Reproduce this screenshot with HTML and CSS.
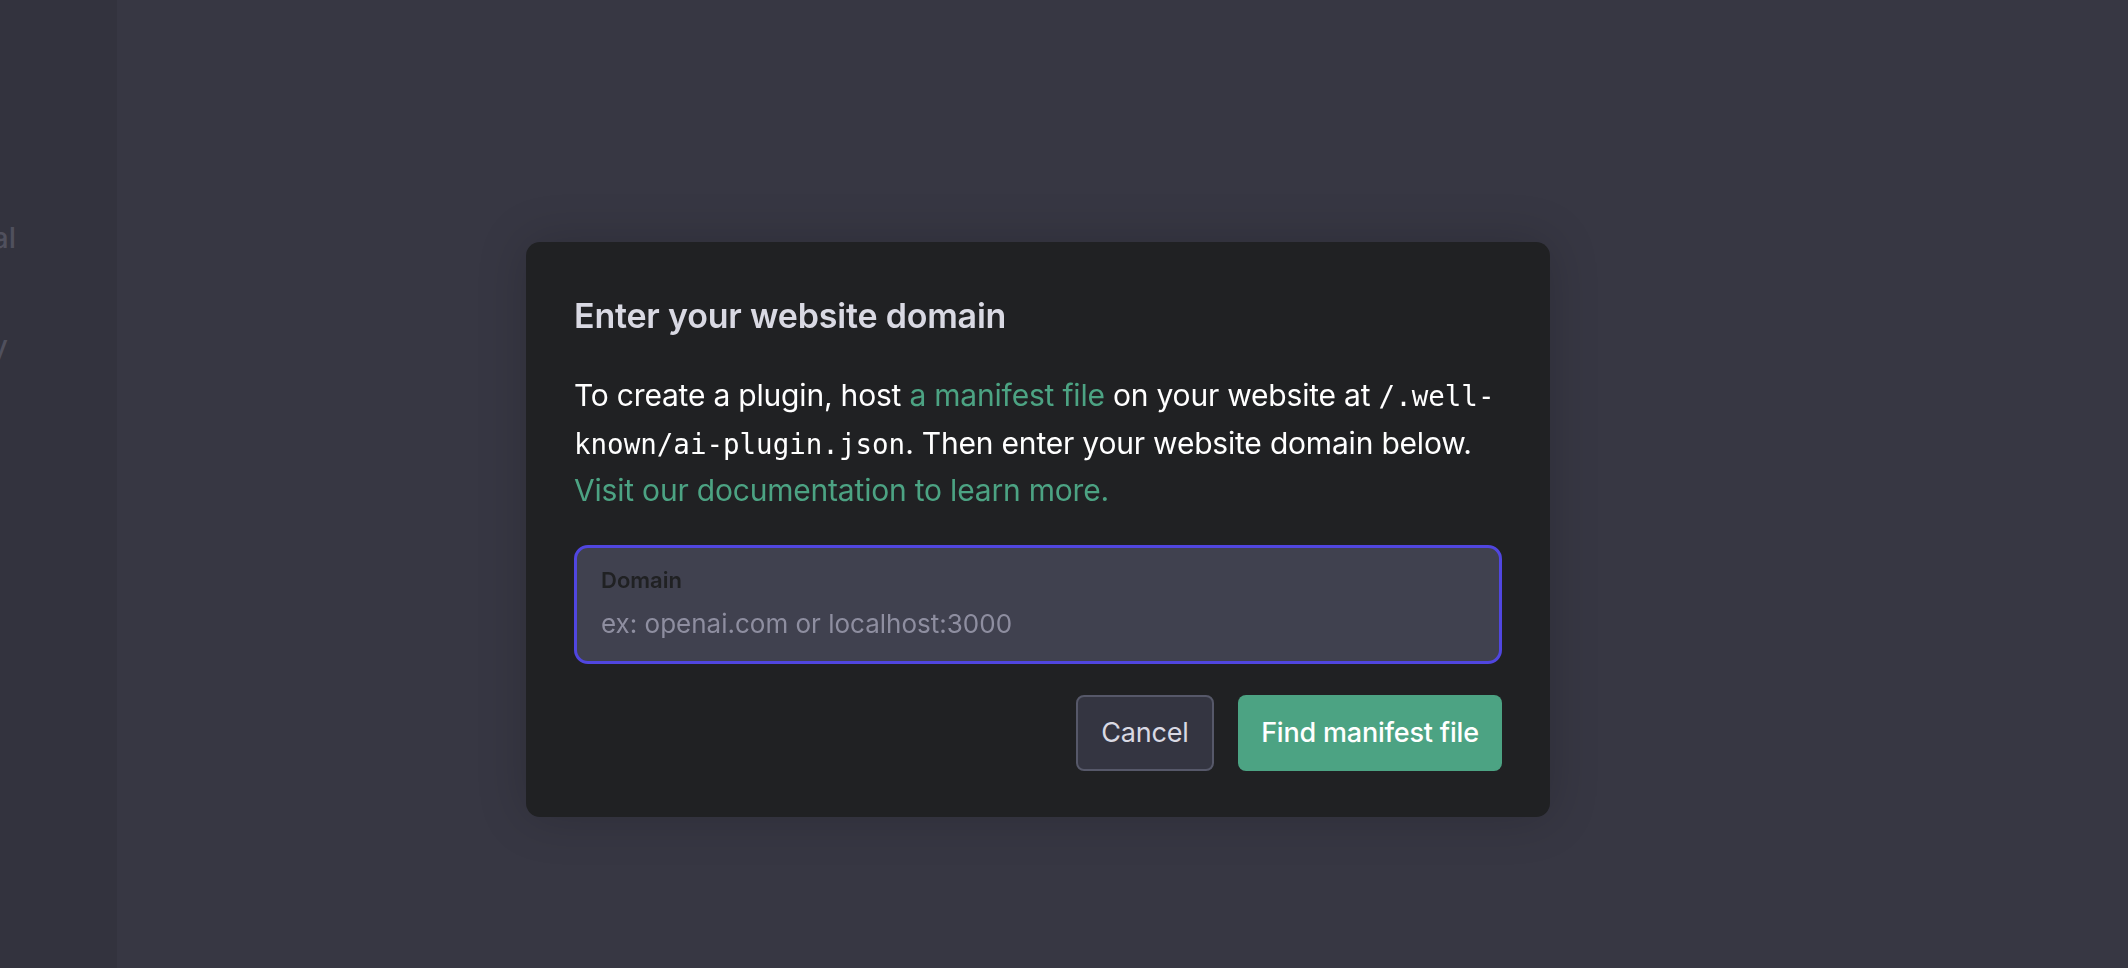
FILE: index.html
```html
<!DOCTYPE html>
<html lang="en">
<head>
<meta charset="utf-8">
<title>Enter your website domain</title>
<link rel="stylesheet" href="styles.css">
</head>
<body>
<div class="app">
  <nav class="sidebar">
    <div class="side-item side-item-a"><span>General</span></div>
    <div class="side-item side-item-b"><span>Privacy</span></div>
  </nav>
  <main class="main"></main>
</div>
<div class="overlay">
  <div class="modal" role="dialog">
    <h2 class="modal-title">Enter your website domain</h2>
    <p class="modal-text">To create a plugin, host <a class="link" href="#">a manifest file</a> on your website at <code>/.well-known/ai-plugin.json</code>. Then enter your website domain below. <a class="link" href="#">Visit our documentation to learn more.</a></p>
    <label class="field">
      <span class="field-label">Domain</span>
      <input class="field-input" type="text" placeholder="ex: openai.com or localhost:3000">
    </label>
    <div class="actions">
      <button class="btn btn-neutral" type="button">Cancel</button>
      <button class="btn btn-primary" type="button">Find manifest file</button>
    </div>
  </div>
</div>
</body>
</html>
```

FILE: styles.css
```css
* { box-sizing: border-box; }
html, body { margin: 0; padding: 0; height: 100%; }
body {
  font-family: Inter, "Noto Sans", "Liberation Sans", sans-serif;
  background: #373743;
  overflow: hidden;
}
.app {
  display: flex;
  height: 968px;
}
.sidebar {
  width: 117px;
  background: #33333e;
  display: flex;
  flex-direction: column;
  padding-top: 220px;
}
.side-item {
  display: flex;
  justify-content: flex-end;
  white-space: nowrap;
  font-size: 29px;
  line-height: 36px;
  font-weight: 500;
  color: #50505d;
}
.side-item-a { width: 16px; }
.side-item-b { width: 8px; margin-top: 72px; }
.main { flex: 1; background: #373743; }

.overlay {
  position: fixed;
  inset: 0;
  display: flex;
  align-items: flex-start;
  justify-content: center;
  padding: 242px 52px 0 0;
}
.modal {
  width: 1024px;
  height: 575px;
  background: #202123;
  border-radius: 14px;
  padding: 50px 48px 0;
  box-shadow: 0 0 50px rgba(0, 0, 0, 0.18);
}
.modal-title {
  margin: 0 0 32px;
  font-size: 34px;
  line-height: 48px;
  font-weight: 600;
  color: #d9d9e3;
  letter-spacing: -0.2px;
}
.modal-text {
  margin: 0 0 30px;
  font-size: 30px;
  line-height: 47.5px;
  color: #ffffff;
  letter-spacing: -0.2px;
}
.modal-text code {
  font-family: "DejaVu Sans Mono", "Liberation Mono", monospace;
  font-size: 27.5px;
  line-height: 1;
  letter-spacing: 0;
}
.link { color: #4ca383; text-decoration: none; }

.field {
  display: flex;
  flex-direction: column;
  gap: 11px;
  background: #40414f;
  border: 3px solid #5046e0;
  border-radius: 14px;
  padding: 17px 24px 19px;
}
.field-label {
  font-size: 22px;
  line-height: 30px;
  font-weight: 600;
  color: #202123;
}
.field-input {
  border: 0;
  outline: 0;
  padding: 0;
  margin: 0;
  background: transparent;
  font-family: inherit;
  font-size: 26px;
  line-height: 36px;
  height: 36px;
  color: #ececf1;
}
.field-input::placeholder { color: #8e8ea0; opacity: 1; }

.actions {
  display: flex;
  justify-content: flex-end;
  gap: 24px;
  margin-top: 31px;
}
.btn {
  font-family: inherit;
  font-size: 27px;
  line-height: 36px;
  height: 76px;
  border-radius: 8px;
  cursor: pointer;
  white-space: nowrap;
  letter-spacing: -0.2px;
  padding: 0;
}
.btn-neutral {
  background: #343541;
  border: 2px solid #565869;
  color: #d9d9e3;
  width: 138px;
}
.btn-primary {
  background: #4ca383;
  border: 0;
  color: #ffffff;
  width: 264px;
  font-weight: 500;
}
```
